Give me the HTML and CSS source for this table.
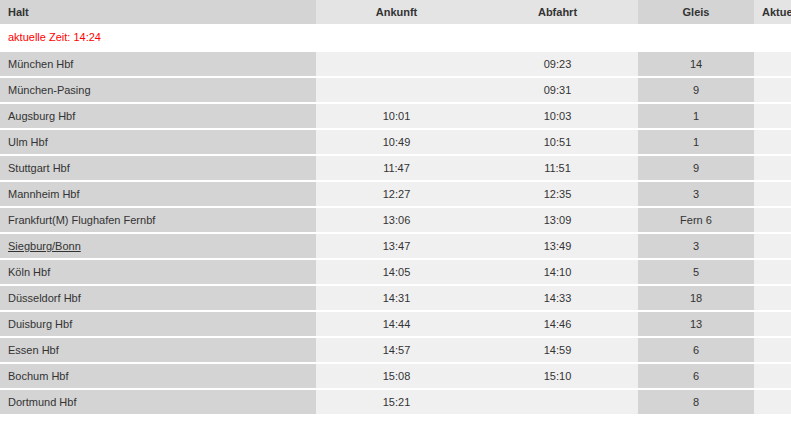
FILE: index.html
```html
<!DOCTYPE html>
<html lang="de">
<head>
  <meta charset="UTF-8">
  <title>Zugverlauf</title>
  <link rel="stylesheet" href="styles.css">
</head>
<body>
  <table class="route">
    <colgroup>
      <col class="col-stop">
      <col class="col-time">
      <col class="col-time">
      <col class="col-track">
      <col class="col-info">
    </colgroup>
    <thead>
      <tr>
        <th class="stop">Halt</th>
        <th class="light">Ankunft</th>
        <th class="light">Abfahrt</th>
        <th class="track">Gleis</th>
        <th class="light info">Aktuell</th>
      </tr>
    </thead>
    <tbody>
      <tr class="now">
        <td colspan="5">aktuelle Zeit: 14:24</td>
      </tr>
      <tr><td class="stop">München Hbf</td><td></td><td>09:23</td><td class="track">14</td><td></td></tr>
      <tr><td class="stop">München-Pasing</td><td></td><td>09:31</td><td class="track">9</td><td></td></tr>
      <tr><td class="stop">Augsburg Hbf</td><td>10:01</td><td>10:03</td><td class="track">1</td><td></td></tr>
      <tr><td class="stop">Ulm Hbf</td><td>10:49</td><td>10:51</td><td class="track">1</td><td></td></tr>
      <tr><td class="stop">Stuttgart Hbf</td><td>11:47</td><td>11:51</td><td class="track">9</td><td></td></tr>
      <tr><td class="stop">Mannheim Hbf</td><td>12:27</td><td>12:35</td><td class="track">3</td><td></td></tr>
      <tr><td class="stop">Frankfurt(M) Flughafen Fernbf</td><td>13:06</td><td>13:09</td><td class="track">Fern 6</td><td></td></tr>
      <tr><td class="stop"><a href="#">Siegburg/Bonn</a></td><td>13:47</td><td>13:49</td><td class="track">3</td><td></td></tr>
      <tr><td class="stop">Köln Hbf</td><td>14:05</td><td>14:10</td><td class="track">5</td><td></td></tr>
      <tr><td class="stop">Düsseldorf Hbf</td><td>14:31</td><td>14:33</td><td class="track">18</td><td></td></tr>
      <tr><td class="stop">Duisburg Hbf</td><td>14:44</td><td>14:46</td><td class="track">13</td><td></td></tr>
      <tr><td class="stop">Essen Hbf</td><td>14:57</td><td>14:59</td><td class="track">6</td><td></td></tr>
      <tr><td class="stop">Bochum Hbf</td><td>15:08</td><td>15:10</td><td class="track">6</td><td></td></tr>
      <tr><td class="stop">Dortmund Hbf</td><td>15:21</td><td></td><td class="track">8</td><td></td></tr>
    </tbody>
  </table>
</body>
</html>
```

FILE: styles.css
```css
body {
  margin: 0;
  overflow: hidden;
  background: #ffffff;
  font-family: "Liberation Sans", Arial, sans-serif;
  font-size: 11px;
  color: #333333;
}

.route {
  width: 900px;
  table-layout: fixed;
  border-collapse: collapse;
}

.col-stop { width: 316px; }
.col-time { width: 161px; }
.col-track { width: 116px; }
.col-info { width: 146px; }

.route th,
.route td {
  padding: 0 8px;
  text-align: center;
  white-space: nowrap;
}

.route th {
  height: 24px;
  font-weight: bold;
  background: #d4d4d4;
}

.route th.light {
  background: #e4e4e4;
}

.route th.info {
  text-align: left;
}

.route .stop {
  text-align: left;
  background: #d4d4d4;
}

.route tbody td {
  height: 24px;
  background: #f0f0f0;
  border-bottom: 2px solid #ffffff;
}

.route tbody td.stop,
.route tbody td.track {
  background: #d4d4d4;
}

.route tr.now td {
  height: 26px;
  background: #ffffff;
  color: #ff0000;
  text-align: left;
}

.route a {
  color: #333333;
}
```
